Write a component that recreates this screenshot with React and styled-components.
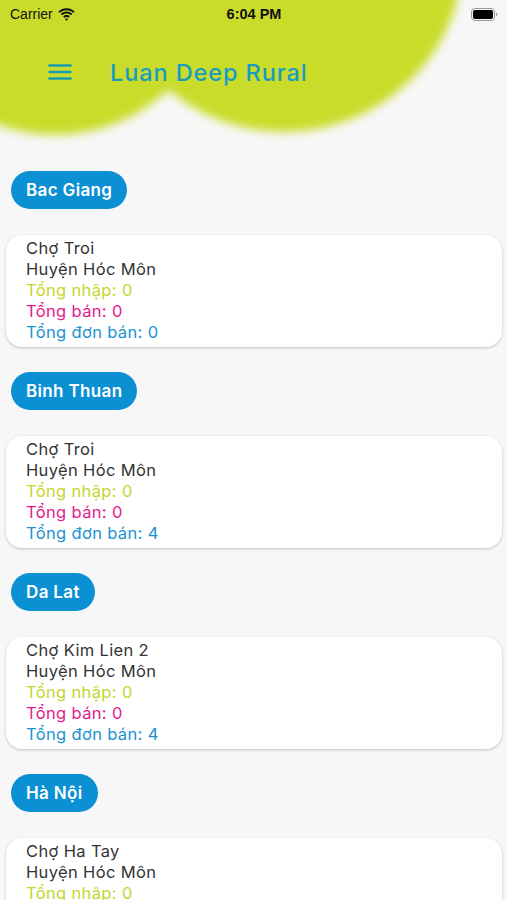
import React from "react";
import styled, { createGlobalStyle } from "styled-components";

const GlobalStyle = createGlobalStyle`
  html, body { margin: 0; padding: 0; background: #f7f7f7; }
  body { font-family: Inter, "Noto Sans", sans-serif; }
`;

const Page = styled.div`
  position: relative;
  width: 100%;
  height: 900px;
  overflow: hidden;
  background: #f7f7f7;
`;

const Blob = styled.div`
  position: absolute;
  border-radius: 50%;
  background: #c9dc2a;
  filter: blur(5px);
  left: ${(p) => p.$cx - p.$r}px;
  top: ${(p) => p.$cy - p.$r}px;
  width: ${(p) => p.$r * 2}px;
  height: ${(p) => p.$r * 2}px;
  z-index: 0;
`;

const Layer = styled.div`
  position: relative;
  z-index: 1;
`;

const StatusBar = styled.div`
  height: 28px;
  display: grid;
  grid-template-columns: 1fr auto 1fr;
  align-items: center;
  padding: 0 9px 0 10px;
  font-family: "Liberation Sans", Arial, sans-serif;
  color: #111;
`;

const Carrier = styled.div`
  display: flex;
  align-items: center;
  gap: 5px;
  font-size: 14px;
`;

const Time = styled.div`
  font-size: 14.5px;
  font-weight: 700;
`;

const Battery = styled.div`
  justify-self: end;
  display: flex;
  align-items: center;
`;

const Header = styled.header`
  height: 88px;
  display: flex;
  align-items: center;
  padding-left: 48px;
  gap: 38px;
`;

const Title = styled.h1`
  margin: 0;
  font-size: 23.5px;
  font-weight: 500;
  color: #1a9bc0;
  letter-spacing: 0.9px;
`;

const List = styled.main`
  padding: 55px 5px 0 6px;
  display: flex;
  flex-direction: column;
`;

const Group = styled.section`
  display: flex;
  flex-direction: column;
  align-items: flex-start;
  margin-bottom: 25px;
`;

const Pill = styled.div`
  margin-left: 5px;
  height: 38px;
  display: flex;
  align-items: center;
  padding: 0 15px;
  border-radius: 19px;
  background: #0b90d4;
  color: #fff;
  font-size: 17px;
  font-weight: 600;
  letter-spacing: 0.35px;
  margin-bottom: 26px;
`;

const Card = styled.div`
  align-self: stretch;
  background: #fff;
  border-radius: 16px;
  box-shadow: 0 1px 3px rgba(0, 0, 0, 0.22);
  padding: 3px 20px 4px 20px;
  display: flex;
  flex-direction: column;
`;

const Line = styled.div`
  font-size: 16.5px;
  line-height: 21px;
  letter-spacing: 0.35px;
  color: ${(p) => p.$color || "#333"};
`;

const data = [
  { region: "Bac Giang", market: "Chợ Troi", district: "Huyện Hóc Môn", nhap: 0, ban: 0, don: 0 },
  { region: "Binh Thuan", market: "Chợ Troi", district: "Huyện Hóc Môn", nhap: 0, ban: 0, don: 4 },
  { region: "Da Lat", market: "Chợ Kim Lien 2", district: "Huyện Hóc Môn", nhap: 0, ban: 0, don: 4 },
  { region: "Hà Nội", market: "Chợ Ha Tay", district: "Huyện Hóc Môn", nhap: 0, ban: 0, don: 0 },
];

const Wifi = () => (
  <svg width="17" height="13" viewBox="0 0 17 13">
    <path d="M8.5 2.2c2.6 0 5 1 6.8 2.7l1.3-1.4C14.5 1.4 11.6.2 8.5.2S2.5 1.4.4 3.5l1.3 1.4C3.5 3.2 5.9 2.2 8.5 2.2z" fill="#111" />
    <path d="M8.5 5.6c1.7 0 3.2.6 4.4 1.7l1.3-1.4C12.7 4.5 10.7 3.6 8.5 3.6S4.3 4.5 2.8 5.9l1.3 1.4c1.2-1.1 2.7-1.7 4.4-1.7z" fill="#111" />
    <path d="M8.5 9c.8 0 1.5.3 2 .8l1.3-1.4C11 7.5 9.8 7 8.5 7s-2.5.5-3.3 1.4l1.3 1.4c.5-.5 1.2-.8 2-.8zM8.5 12.8l1.6-1.7c-.4-.4-1-.7-1.6-.7s-1.2.3-1.6.7z" fill="#111" />
  </svg>
);

const BatteryIcon = () => (
  <svg width="27" height="13" viewBox="0 0 27 13">
    <rect x="0.5" y="0.5" width="23" height="12" rx="3.5" fill="none" stroke="#999" />
    <rect x="2" y="2" width="20" height="9" rx="2" fill="#000" />
    <path d="M25 4.5v4c.8-.3 1.3-1.1 1.3-2s-.5-1.7-1.3-2z" fill="#999" />
  </svg>
);

const Menu = () => (
  <svg width="24" height="18" viewBox="0 0 24 18">
    <g stroke="#1f9ab4" strokeWidth="2.6" strokeLinecap="round">
      <line x1="1.5" y1="2.5" x2="22.5" y2="2.5" />
      <line x1="1.5" y1="9" x2="22.5" y2="9" />
      <line x1="1.5" y1="15.5" x2="22.5" y2="15.5" />
    </g>
  </svg>
);

export default function App() {
  return (
    <>
      <GlobalStyle />
      <Page>
        <Blob $cx={55} $cy={-30} $r={165} />
        <Blob $cx={284} $cy={-48} $r={180} />
        <Layer>
          <StatusBar>
            <Carrier>
              Carrier <Wifi />
            </Carrier>
            <Time>6:04 PM</Time>
            <Battery>
              <BatteryIcon />
            </Battery>
          </StatusBar>
          <Header>
            <Menu />
            <Title>Luan Deep Rural</Title>
          </Header>
          <List>
            {data.map((d) => (
              <Group key={d.region}>
                <Pill>{d.region}</Pill>
                <Card>
                  <Line>{d.market}</Line>
                  <Line>{d.district}</Line>
                  <Line $color="#c3d62e">Tổng nhập: {d.nhap}</Line>
                  <Line $color="#e3198c">Tổng bán: {d.ban}</Line>
                  <Line $color="#1a93d0">Tổng đơn bán: {d.don}</Line>
                </Card>
              </Group>
            ))}
          </List>
        </Layer>
      </Page>
    </>
  );
}
